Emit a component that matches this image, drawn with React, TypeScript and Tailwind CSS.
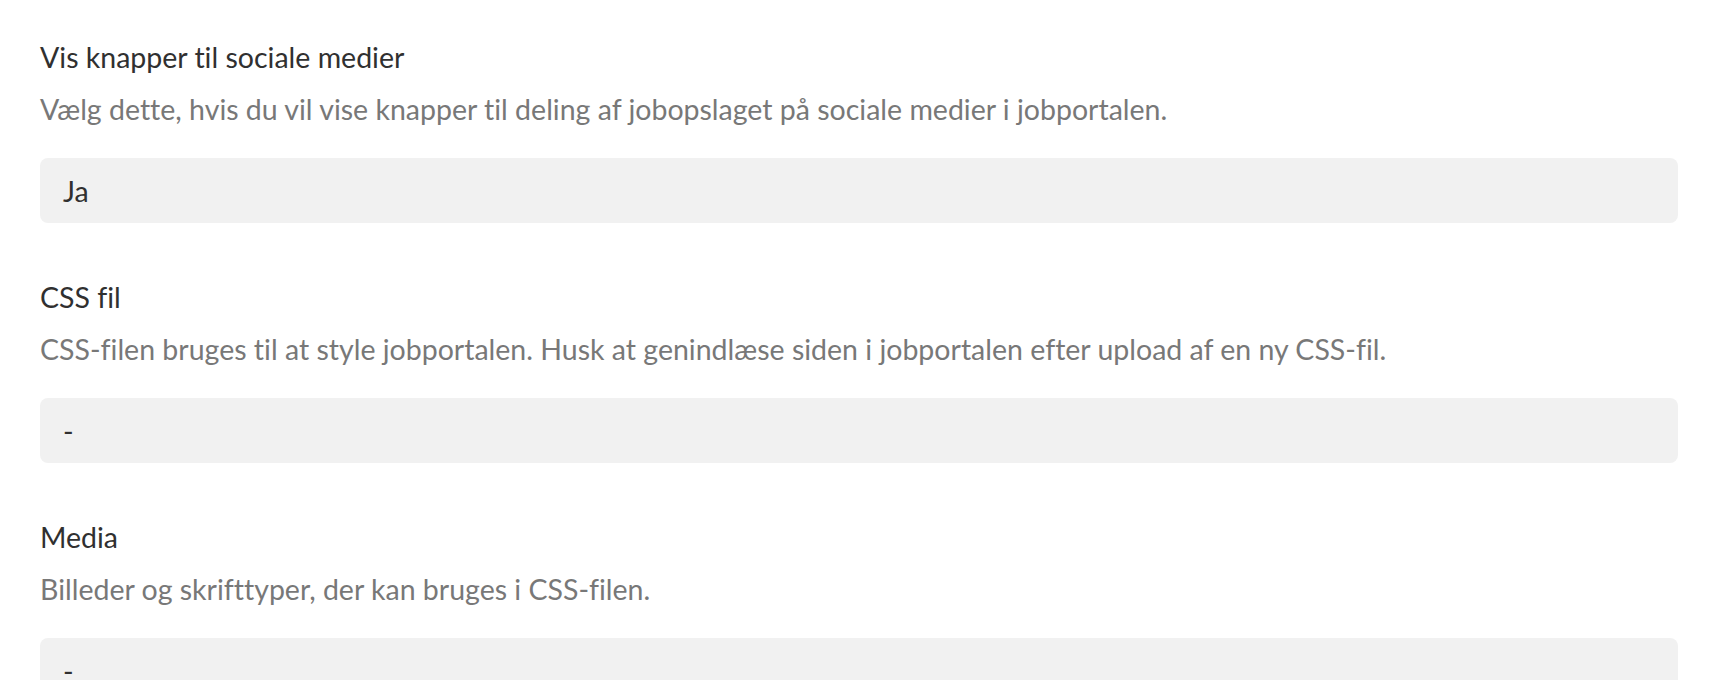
import React from "react";

const sections = [
  {
    title: "Vis knapper til sociale medier",
    desc: "Vælg dette, hvis du vil vise knapper til deling af jobopslaget på sociale medier i jobportalen.",
    value: "Ja",
  },
  {
    title: "CSS fil",
    desc: "CSS-filen bruges til at style jobportalen. Husk at genindlæse siden i jobportalen efter upload af en ny CSS-fil.",
    value: "-",
  },
  {
    title: "Media",
    desc: "Billeder og skrifttyper, der kan bruges i CSS-filen.",
    value: "-",
  },
];

export default function App() {
  return (
    <div className="bg-white px-10 pt-[39px] font-['Lato','Open_Sans',sans-serif] text-[28.5px] leading-[36px] [font-variant-ligatures:none]">
      <div className="flex flex-col gap-[56px]">
        {sections.map((s) => (
          <div key={s.title} className="flex flex-col">
            <div className="text-[#303030]">{s.title}</div>
            <div className="mt-[16px] text-[#787878]">{s.desc}</div>
            <div className="mt-[31px] flex h-[65px] items-center rounded-[8px] bg-[#f1f1f1] px-[23px] text-[#303030]">
              {s.value}
            </div>
          </div>
        ))}
      </div>
    </div>
  );
}
